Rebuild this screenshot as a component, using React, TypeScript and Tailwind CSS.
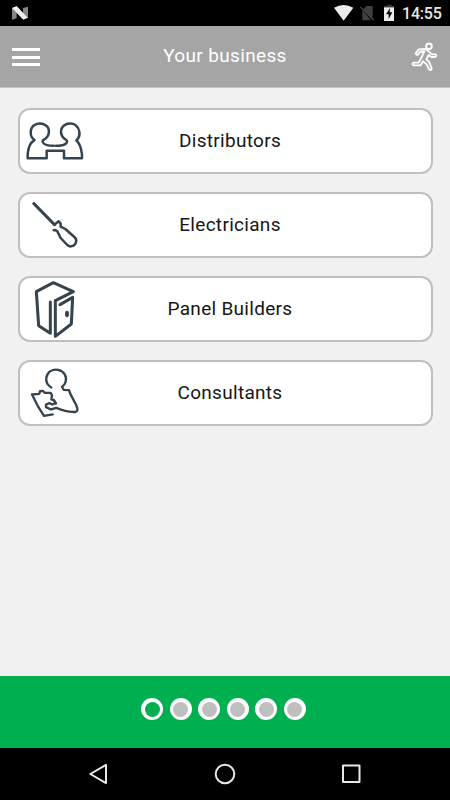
import type { ReactNode } from 'react';

function IconFrame({ viewBox, width, children }: { viewBox: string; width: number; children: ReactNode }) {
  return (
    <svg className="h-[62px] w-[70px] shrink-0" viewBox={viewBox} fill="none" stroke="#34434e" strokeWidth={width} strokeLinejoin="round" strokeLinecap="round">
      {children}
    </svg>
  );
}

function DistributorsIcon() {
  return (
    <IconFrame viewBox="30 28.5 210 186" width={7.5}>
      <path d="M131 136C119 136 103 133 99 126C96 122 98 119 103 117C119 108 122 84 107 74C98 68 83 67 73 74C59 83 58 108 73 118C74 119 73 120 71 121C56 129 52 156 53 173H110V151H162V173H216C217 158 212 130 199 120C199 119 202 117 204 114C212 103 209 83 197 74C187 67 171 68 162 75C148 86 151 108 167 117C173 121 172 125 168 129C162 134 149 136 138 136" />
    </IconFrame>
  );
}

function ScrewdriverIcon() {
  return (
    <IconFrame viewBox="30 29 210 186" width={7.5}>
      <path d="M71 57L133 121L146 111L152 118V127L166 134L193 158Q201 165 198 173Q196 184 183 186Q178 187 172 182L152 161L142 141L136 137L131 138" />
      <path d="M72 58L134 121" strokeWidth="8.5" />
    </IconFrame>
  );
}

function PanelIcon() {
  return (
    <IconFrame viewBox="30 30 210 186" width={9}>
      <path d="M121 102V196L86 173L79 71L130 44L190 71L136 98V205L184 168L188 88L150 110" />
      <ellipse cx="171" cy="138" rx="6" ry="9.5" fill="#34434e" stroke="none" />
    </IconFrame>
  );
}

function ConsultantIcon() {
  return (
    <IconFrame viewBox="30 24.6 210 186" width={7}>
      <path d="M124 101C112 94 107 85 109 71C112 54 127 45 144 48C162 51 171 68 167 84C165 92 161 96 156 99L161 108L177 109C183 132 198 145 202 163Q204 177 188 174C170 174 151 167 139 162L123 167L108 160V152L118 148L127 152L137 148L131 139L124 137L126 125L122 117H105L98 111L90 112L88 120L66 122L83 156L102 186L128 182" />
      <path d="M131 138L138 149" />
    </IconFrame>
  );
}

const entries = [
  { label: 'Distributors', icon: <DistributorsIcon /> },
  { label: 'Electricians', icon: <ScrewdriverIcon /> },
  { label: 'Panel Builders', icon: <PanelIcon /> },
  { label: 'Consultants', icon: <ConsultantIcon /> },
];

function StatusBar() {
  return (
    <div className="flex h-[26px] shrink-0 items-center bg-black pr-2 pl-3">
      <svg className="h-[26px] w-4" viewBox="36 0 48 78">
        <path d="M36 24L50 20V55L36 59ZM69 24L84 20V53L69 58Z" fill="#858585" />
        <path d="M36 24L50 18L83 53L70 59Z" fill="#eeeeee" />
      </svg>
      <svg className="ml-auto h-[26px] w-[62px]" viewBox="102 0 186 78">
        <path d="M102 23Q131 7 160 23L131 62Z" fill="#ececec" />
        <path d="M190 28L199 18H218V58L181 22V22ZM187 30L213 61H187Z" fill="#404040" />
        <path d="M181 21L221 61" stroke="#404040" strokeWidth="4" />
        <path d="M252 22V18H261V14H275V18H282V22Z" fill="#3b3b3b" />
        <path d="M252 22H282V63H252Z" fill="#ececec" />
        <path d="M270 24L258 43H266V57L277 37H269Z" fill="#000" />
      </svg>
      <span className="ml-1.5 h-[18px] w-[40px] text-[16px] leading-5 font-medium tracking-[-0.2px] whitespace-nowrap text-[#e8e8e8]">14:55</span>
    </div>
  );
}

function Header() {
  return (
    <header className="flex h-[61.5px] shrink-0 items-center justify-between border-b border-[#c4c4c4] bg-[#a5a5a5] pr-3 pl-3">
      <div className="flex w-7 flex-col gap-[4.7px] pt-[2px]">
        <i className="h-[3px] bg-white" />
        <i className="h-[3px] bg-white" />
        <i className="h-[3px] bg-white" />
      </div>
      <h1 className="ml-[-1px] text-[19px] leading-6 tracking-[0.35px] text-white">Your business</h1>
      <svg className="h-[30px] w-[27px]" viewBox="334 124 81 90" fill="none" stroke="white" strokeWidth="5.5" strokeLinejoin="round" strokeLinecap="round">
        <circle cx="388" cy="140" r="8.5" />
        <path d="M357 149L379 148L391 159L397 164H407Q413 168 407 172H395L387 166L380 179L388 186L396 206Q396 213 389 210L380 193L370 185L363 197H341Q335 193 341 189H357L364 176L374 155L361 157L355 165Q350 167 348 161Z" />
      </svg>
    </header>
  );
}

export default function App() {
  return (
    <div className="flex h-[800px] w-[450px] flex-col overflow-hidden bg-[#f1f1f1] font-[Roboto,'Liberation_Sans',sans-serif]">
      <StatusBar />
      <Header />
      <main className="flex flex-1 flex-col gap-[18.2px] pt-5 pr-[17px] pl-[18px]">
        {entries.map((entry) => (
          <button key={entry.label} className="flex h-[66px] shrink-0 items-center rounded-[12px] border-2 border-[#bfbfbf] bg-white">
            {entry.icon}
            <span className="mr-[61px] flex-1 text-center text-[19px] leading-6 tracking-[0.3px] text-[#151515]">{entry.label}</span>
          </button>
        ))}
      </main>
      <footer className="flex h-[72px] shrink-0 justify-center gap-[6.5px] bg-[#00b050] pt-[22px] pr-[3px]">
        {[0, 1, 2, 3, 4, 5].map((page) => (
          <span key={page} className="flex size-[22px] items-center justify-center rounded-full bg-white">
            <span className={page === 0 ? 'size-[15px] rounded-full bg-[#00b050]' : 'size-[15px] rounded-full bg-[#bfbfbf]'} />
          </span>
        ))}
      </footer>
      <nav className="flex h-[52px] shrink-0 items-center justify-between bg-black pr-[88px] pl-[88px]">
        <svg className="size-[22px]" viewBox="0 0 22 22" fill="none" stroke="#e8e8e8" strokeWidth="2" strokeLinejoin="round">
          <path d="M2.3 11L18 1.9V20.1Z" />
        </svg>
        <svg className="size-[22px]" viewBox="0 0 22 22" fill="none" stroke="#e8e8e8" strokeWidth="2">
          <circle cx="11" cy="11" r="9.3" />
        </svg>
        <svg className="size-[22px]" viewBox="0 0 22 22" fill="none" stroke="#e8e8e8" strokeWidth="2" strokeLinejoin="round">
          <rect x="3" y="2.5" width="16.5" height="16.5" />
        </svg>
      </nav>
    </div>
  );
}
